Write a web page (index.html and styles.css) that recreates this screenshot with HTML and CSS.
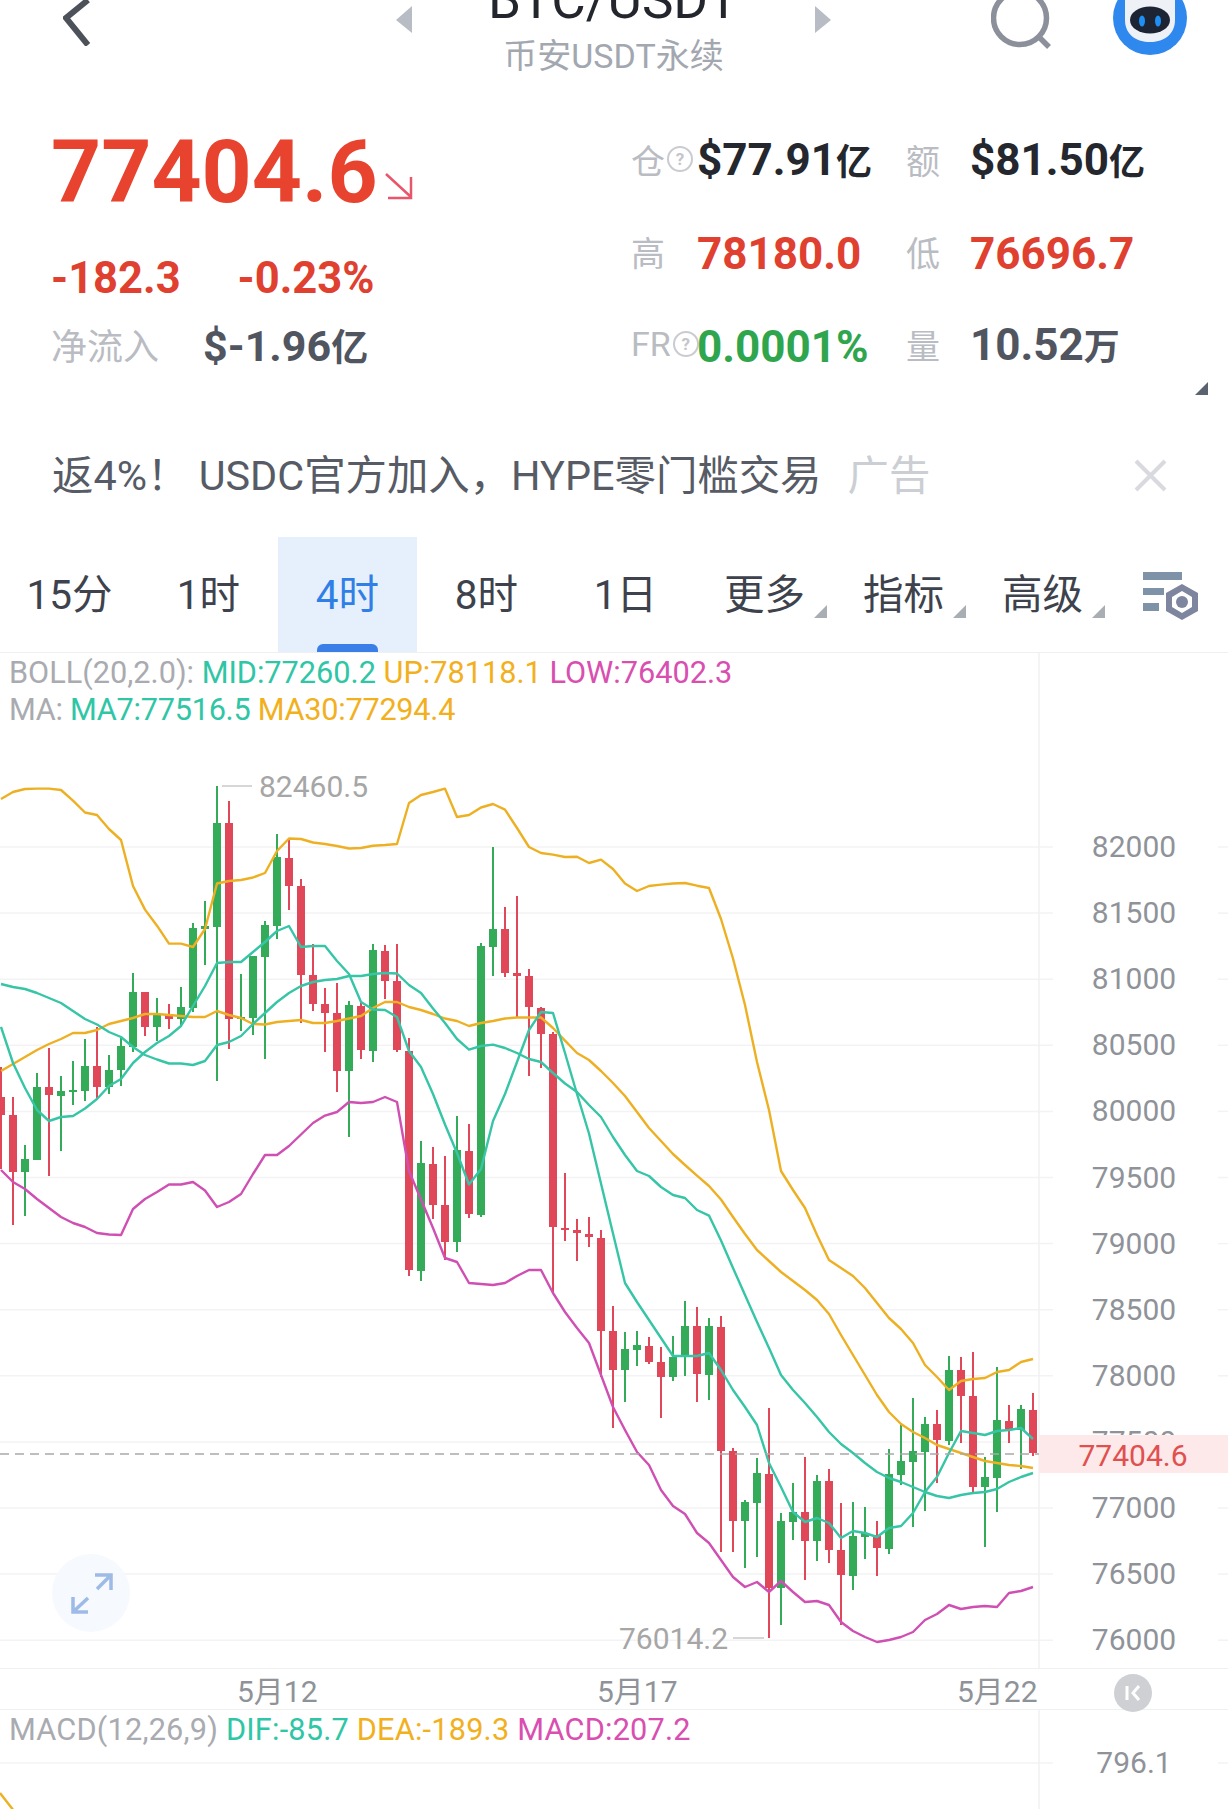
FILE: index.html
```html
<!DOCTYPE html>
<html lang="zh">
<head>
    <meta charset="UTF-8">
    <meta name="viewport" content="width=device-width, initial-scale=1.0">
    <title>BTC/USDT</title>
    <link rel="stylesheet" href="styles.css">
</head>
<body>
    <div class="page">
        <header class="topbar">
            <svg class="icon-back" viewBox="0 0 27 46"><path d="M25 0 L3 18 L25 45"/></svg>
            <svg class="icon-tri-left" viewBox="0 0 16 27"><path d="M16 0 V27 L0 14 Z"/></svg>
            <div class="title">
                <div class="title-main">BTC/USDT</div>
                <div class="title-sub">币安USDT永续</div>
            </div>
            <svg class="icon-tri-right" viewBox="0 0 16 27"><path d="M0 0 V27 L16 14 Z"/></svg>
            <svg class="icon-search" viewBox="0 0 60 50"><circle cx="29" cy="18" r="26.5"/><path d="M48 37 L58 47"/></svg>
            <svg class="icon-avatar" viewBox="0 0 74 56">
                <circle cx="37" cy="18" r="37" fill="#2f88ee"/>
                <path d="M12 -4 L20 -2 H54 L62 -4 V20 C62 35 50 42 37 42 C24 42 12 35 12 20 Z" fill="#eef2f6"/>
                <ellipse cx="37" cy="20" rx="20" ry="13.5" fill="#1d2433"/>
                <ellipse cx="29" cy="21" rx="3" ry="5.5" fill="#1e8ff5"/>
                <ellipse cx="45" cy="21" rx="3" ry="5.5" fill="#1e8ff5"/>
            </svg>
        </header>

        <section class="quote">
            <div class="quote-left">
                <div class="price">77404.6<svg class="icon-down" viewBox="0 0 30 28"><path d="M2 2 L27 25 M27 5 V26 H4"/></svg></div>
                <div class="change"><span>-182.3</span><span>-0.23%</span></div>
                <div class="netflow"><span class="label">净流入</span><span class="netflow-val">$-1.96<span class="unit">亿</span></span></div>
            </div>
            <div class="quote-right">
                <div class="stat"><span class="label">仓<i class="tip">?</i></span><b class="dark">$77.91<span class="unit">亿</span></b></div>
                <div class="stat"><span class="label">额</span><b class="dark">$81.50<span class="unit">亿</span></b></div>
                <div class="stat"><span class="label">高</span><b class="red">78180.0</b></div>
                <div class="stat"><span class="label">低</span><b class="red">76696.7</b></div>
                <div class="stat"><span class="label">FR<i class="tip">?</i></span><b class="green">0.0001%</b></div>
                <div class="stat"><span class="label">量</span><b class="slate">10.52<span class="unit">万</span></b></div>
            </div>
        </section>
        <div class="quote-more"><svg viewBox="0 0 13 13"><path d="M13 0 V13 H0 Z"/></svg></div>

        <div class="notice">
            <span class="notice-text">返4%！ USDC官方加入，HYPE零门槛交易</span>
            <span class="notice-ad">广告</span>
            <svg class="icon-close" viewBox="0 0 33 33"><path d="M2 2 L31 31 M31 2 L2 31"/></svg>
        </div>

        <nav class="tabs">
            <div class="tab">15分</div>
            <div class="tab">1时</div>
            <div class="tab active">4时</div>
            <div class="tab">8时</div>
            <div class="tab">1日</div>
            <div class="tab more">更多</div>
            <div class="tab more">指标</div>
            <div class="tab more">高级</div>
            <div class="tab-setting">
                <svg viewBox="0 0 58 50">
                    <rect class="bar" x="0" y="0" width="39" height="8"/>
                    <rect class="bar" x="0" y="16" width="21" height="7"/>
                    <rect class="bar" x="0" y="31" width="16" height="8"/>
                    <path class="hex" fill-rule="evenodd" d="M39 12 L55 21 V39 L39 48 L23 39 V21 Z M39 19 L29 25 V35 L39 41 L49 35 V25 Z"/>
                    <circle class="hex" cx="39" cy="30" r="6"/>
                </svg>
            </div>
        </nav>

        <div class="chart-pane">
            <div class="legend">
                <div><span class="c-gray">BOLL(20,2.0):</span> <span class="c-teal">MID:77260.2</span> <span class="c-orange">UP:78118.1</span> <span class="c-pink">LOW:76402.3</span></div>
                <div class="legend-tight"><span class="c-gray">MA:</span> <span class="c-teal">MA7:77516.5</span> <span class="c-orange">MA30:77294.4</span></div>
            </div>
            <svg id="kline" class="chart" viewBox="0 653 1228 1015"></svg>
        </div>

        <div class="xaxis">
            <span>5月12</span>
            <span>5月17</span>
            <span>5月22</span>
            <svg class="icon-k" viewBox="0 0 38 38"><circle cx="19" cy="19" r="19"/><path d="M13 12 V26 M25 12 L19 19 L25 26"/></svg>
        </div>

        <div class="macd-pane">
            <div class="legend">
                <div class="legend-wide"><span class="c-gray">MACD(12,26,9)</span> <span class="c-teal">DIF:-85.7</span> <span class="c-orange">DEA:-189.3</span> <span class="c-pink">MACD:207.2</span></div>
            </div>
            <svg class="chart" viewBox="0 1710 1228 99">
                <line class="grid" x1="0" y1="1763" x2="1053" y2="1763"/>
                <line class="grid" x1="1218" y1="1763" x2="1228" y2="1763"/>
                <line class="axis-line" x1="1039" y1="1710" x2="1039" y2="1809"/>
                <text class="axis-label" x="1134" y="1773" text-anchor="middle">796.1</text>
                <polyline class="line-orange" points="0,1793 14,1811"/>
            </svg>
        </div>
    </div>
    <script src="chart.js"></script>
</body>
</html>
```

FILE: styles.css
```css
* {
    box-sizing: border-box;
}

html, body {
    margin: 0;
    padding: 0;
    background-color: #fff;
}

body {
    font-family: Roboto, "Noto Sans CJK SC", sans-serif;
    color: #333;
}

.page {
    width: 1228px;
    height: 1809px;
    overflow: hidden;
}

/* 顶部栏 */
.topbar {
    display: flex;
    align-items: flex-start;
    height: 90px;
    padding-left: 63px;
}

.topbar svg {
    flex: none;
}

.icon-back {
    width: 27px;
    height: 46px;
    fill: none;
    stroke: #4d5159;
    stroke-width: 6;
}

.icon-tri-left,
.icon-tri-right {
    width: 16px;
    height: 27px;
    margin-top: 6px;
    fill: #b7bcc5;
}

.icon-tri-left {
    margin-left: 306px;
}

.title {
    width: 403px;
    text-align: center;
}

.title-main {
    margin-top: -26px;
    font-size: 53px;
    line-height: 52px;
    color: #23262c;
}

.title-sub {
    margin-top: 12px;
    font-size: 34px;
    line-height: 36px;
    color: #a2a7b0;
}

.icon-search {
    width: 60px;
    height: 50px;
    margin-left: 160px;
    fill: none;
    stroke: #8b909a;
    stroke-width: 5.5;
}

.icon-avatar {
    width: 74px;
    height: 56px;
    margin-left: 62px;
}

/* 行情 */
.quote {
    display: flex;
    height: 279px;
    padding: 36px 0 0 51px;
}

.quote-left {
    width: 580px;
}

.price {
    display: flex;
    align-items: flex-end;
    height: 92px;
    font-size: 87.5px;
    line-height: 92px;
    font-weight: 700;
    color: #e8432f;
}

.icon-down {
    width: 30px;
    height: 28px;
    margin: 0 0 18px 6px;
    fill: none;
    stroke: #e9556a;
    stroke-width: 2.5;
}

.change {
    display: flex;
    gap: 57px;
    margin-top: 38px;
    font-size: 43.5px;
    line-height: 46px;
    font-weight: 700;
    color: #e0402f;
}

.netflow {
    display: flex;
    gap: 44px;
    margin-top: 21px;
    line-height: 46px;
}

.label {
    display: flex;
    align-items: center;
    font-size: 36px;
    color: #b9bcc2;
}

.netflow-val {
    font-size: 43px;
    font-weight: 700;
    color: #50555f;
}

.unit {
    font-size: 36px;
}

.netflow-val .unit {
    font-size: 37px;
}

.quote-right {
    display: grid;
    grid-template-columns: 275px 1fr;
    grid-auto-rows: 46px;
    row-gap: 46.5px;
    margin-top: 10px;
}

.stat {
    display: flex;
    align-items: center;
    white-space: nowrap;
}

.stat .label {
    width: 66px;
    font-size: 34px;
}

.stat:nth-child(even) .label {
    width: 64px;
}

.stat b {
    padding-top: 5px;
    font-size: 44px;
    line-height: 46px;
}

.dark {
    color: #24272d;
}

.red {
    color: #e0402f;
}

.green {
    color: #2fa64e;
}

.slate {
    color: #50555f;
}

.tip {
    flex: none;
    width: 26px;
    height: 26px;
    margin-left: 2px;
    border: 2px solid #c9cbd0;
    border-radius: 50%;
    font-size: 17px;
    font-style: normal;
    font-weight: 700;
    line-height: 22px;
    text-align: center;
    color: #c3c5ca;
}

.quote-more {
    display: flex;
    justify-content: flex-end;
    height: 13px;
    margin-top: 13px;
    padding-right: 20px;
}

.quote-more svg {
    width: 13px;
    height: 13px;
    fill: #5b6270;
}

/* 广告条 */
.notice {
    display: flex;
    align-items: center;
    height: 60px;
    margin-top: 50px;
    padding: 0 0 0 52px;
    font-size: 41.4px;
    white-space: nowrap;
}

.notice-text {
    margin-bottom: 6px;
    color: #565b65;
}

.notice-ad {
    margin-bottom: 6px;
    margin-left: 26px;
    color: #cbced3;
}

.icon-close {
    width: 33px;
    height: 33px;
    margin-left: 204px;
    fill: none;
    stroke: #d8dadf;
    stroke-width: 4;
}

/* 周期切换 */
.tabs {
    display: grid;
    grid-template-columns: repeat(8, 139px) 1fr;
    height: 116px;
    margin-top: 32px;
    border-bottom: 1px solid #f0f0f2;
}

.tab {
    position: relative;
    display: flex;
    align-items: center;
    justify-content: center;
    padding-bottom: 7px;
    font-size: 40.5px;
    color: #3d424c;
}

.tab.active {
    background-color: #e6f0fc;
    color: #2f7fe6;
}

.tab.active::after {
    content: "";
    position: absolute;
    left: 39px;
    bottom: 0;
    width: 61px;
    height: 8px;
    border-radius: 6px 6px 0 0;
    background-color: #3a7fe8;
}

.tab.more::after {
    content: "";
    position: absolute;
    right: 7px;
    top: 68px;
    border-style: solid;
    border-width: 0 0 13px 13px;
    border-color: transparent transparent #a9adb4 transparent;
}

.tab-setting {
    display: flex;
    padding: 35px 0 0 31px;
}

.tab-setting svg {
    width: 58px;
    height: 50px;
}

.bar {
    fill: #7f93a8;
}

.hex {
    fill: #7d859f;
}

/* K线 */
.chart-pane,
.macd-pane {
    position: relative;
}

.chart-pane {
    height: 1015px;
}

.macd-pane {
    height: 99px;
}

.chart {
    display: block;
    width: 1228px;
    height: 100%;
}

.legend {
    position: absolute;
    left: 9px;
    top: 1px;
    z-index: 1;
    font-size: 30.7px;
    line-height: 37px;
    white-space: nowrap;
}

.legend-tight {
    letter-spacing: -0.27px;
}

.legend-wide {
    letter-spacing: 0.2px;
}

.c-gray {
    color: #a9abb0;
}

.c-teal {
    color: #2fc6a6;
}

.c-orange {
    color: #f2b01e;
}

.c-pink {
    color: #d94fb0;
}

.grid {
    stroke: #f3f3f5;
    stroke-width: 1.5;
}

.axis-line {
    stroke: #f0f0f2;
    stroke-width: 1.5;
}

.axis-label {
    font-size: 30px;
    fill: #8f9399;
}

.extreme-label {
    font-size: 30px;
    fill: #a6a6a6;
}

.extreme-line {
    stroke: #c8c8c8;
    stroke-width: 1.5;
}

.last-line {
    stroke: #a9a9a9;
    stroke-width: 1.5;
    stroke-dasharray: 9 6;
}

.last-bg {
    fill: #fde9e9;
}

.last-label {
    font-size: 30px;
    fill: #e0504f;
}

.wick-r,
.body-r {
    stroke: #e0485a;
    fill: #e0485a;
}

.wick-g,
.body-g {
    stroke: #34ab59;
    fill: #34ab59;
}

.wick-r,
.wick-g {
    stroke-width: 2;
}

.body-r,
.body-g {
    stroke: none;
}

.line-orange,
.line-teal,
.line-pink {
    fill: none;
    stroke-width: 2.4;
    stroke-linejoin: round;
}

.line-orange {
    stroke: #eeb023;
}

.line-teal {
    stroke: #36c5a6;
}

.line-pink {
    stroke: #cf4fb3;
}

.expand-bg {
    fill: #f6f9fd;
}

.expand-arrow {
    fill: none;
    stroke: #9dbbe6;
    stroke-width: 3.5;
}

/* 时间轴 */
.xaxis {
    display: flex;
    align-items: center;
    gap: 280px;
    height: 42px;
    padding-left: 237px;
    border-top: 1.5px solid #f0f0f2;
    border-bottom: 1.5px solid #f0f0f2;
    font-size: 30px;
    color: #8f9399;
}

.xaxis span {
    flex: none;
    width: 80px;
    white-space: nowrap;
}

.icon-k {
    flex: none;
    align-self: flex-start;
    width: 38px;
    height: 38px;
    margin: 5px 0 0 -203px;
    overflow: visible;
}

.icon-k circle {
    fill: #cfd0d3;
}

.icon-k path {
    fill: none;
    stroke: #fff;
    stroke-width: 3;
}
```

FILE: chart.js
```js
// 数据为页面像素坐标：[高, 低, 实体上, 实体下, 颜色]
const candles = [
    [1067, 1169, 1097, 1115, 'r'], [1097, 1225, 1115, 1172, 'r'], [1145, 1216, 1159, 1172, 'g'], [1073, 1160, 1087, 1160, 'g'],
    [1048, 1176, 1087, 1095, 'r'], [1076, 1151, 1091, 1096, 'g'], [1061, 1105, 1090, 1092, 'g'], [1039, 1101, 1066, 1091, 'g'],
    [1027, 1099, 1066, 1087, 'r'], [1055, 1094, 1070, 1087, 'g'], [1038, 1086, 1046, 1070, 'g'], [973, 1052, 992, 1047, 'g'],
    [992, 1036, 992, 1027, 'r'], [998, 1041, 1014, 1027, 'g'], [1004, 1029, 1015, 1019, 'r'], [987, 1026, 1007, 1019, 'g'],
    [923, 1012, 928, 1008, 'g'], [901, 965, 926, 929, 'g'], [786, 1081, 823, 927, 'g'], [801, 1049, 823, 1019, 'r'],
    [974, 1031, 1017, 1019, 'g'], [956, 1035, 956, 1018, 'g'], [921, 1059, 925, 957, 'g'], [834, 939, 857, 926, 'g'],
    [840, 910, 858, 886, 'r'], [879, 1023, 886, 975, 'r'], [944, 1011, 975, 1004, 'r'], [988, 1052, 1004, 1013, 'r'],
    [983, 1092, 1013, 1071, 'r'], [1001, 1137, 1005, 1071, 'g'], [1002, 1059, 1006, 1050, 'r'], [944, 1062, 950, 1051, 'g'],
    [945, 999, 951, 981, 'r'], [944, 1052, 981, 1050, 'r'], [1038, 1276, 1051, 1270, 'r'], [1141, 1281, 1163, 1271, 'g'],
    [1147, 1219, 1164, 1205, 'r'], [1156, 1260, 1205, 1242, 'r'], [1116, 1252, 1150, 1242, 'g'], [1124, 1218, 1151, 1214, 'r'],
    [943, 1217, 946, 1215, 'g'], [847, 976, 929, 947, 'g'], [907, 977, 929, 973, 'r'], [896, 1017, 973, 976, 'r'],
    [969, 1076, 976, 1007, 'r'], [1007, 1068, 1008, 1034, 'r'], [1032, 1294, 1034, 1227, 'r'], [1173, 1241, 1228, 1229, 'r'],
    [1219, 1261, 1230, 1233, 'r'], [1217, 1247, 1234, 1237, 'r'], [1230, 1377, 1238, 1331, 'r'], [1306, 1428, 1331, 1370, 'r'],
    [1332, 1402, 1349, 1370, 'g'], [1331, 1366, 1345, 1350, 'g'], [1337, 1364, 1346, 1362, 'r'], [1347, 1418, 1362, 1377, 'r'],
    [1336, 1381, 1357, 1377, 'g'], [1301, 1376, 1326, 1357, 'g'], [1307, 1402, 1326, 1374, 'r'], [1318, 1400, 1326, 1375, 'g'],
    [1316, 1552, 1327, 1451, 'r'], [1448, 1552, 1451, 1521, 'r'], [1500, 1568, 1502, 1521, 'g'], [1458, 1557, 1473, 1503, 'g'],
    [1408, 1638, 1474, 1588, 'r'], [1513, 1625, 1521, 1588, 'g'], [1483, 1540, 1512, 1522, 'g'], [1457, 1580, 1512, 1541, 'r'],
    [1475, 1561, 1481, 1541, 'g'], [1469, 1563, 1481, 1550, 'r'], [1503, 1625, 1550, 1575, 'r'], [1502, 1590, 1536, 1576, 'g'],
    [1507, 1559, 1533, 1537, 'g'], [1521, 1576, 1535, 1548, 'r'], [1449, 1554, 1474, 1549, 'g'], [1423, 1485, 1461, 1475, 'g'],
    [1398, 1527, 1451, 1462, 'g'], [1417, 1511, 1424, 1452, 'g'], [1410, 1483, 1424, 1440, 'r'], [1356, 1445, 1370, 1441, 'g'],
    [1357, 1443, 1370, 1396, 'r'], [1352, 1493, 1396, 1487, 'r'], [1457, 1547, 1477, 1487, 'g'], [1367, 1512, 1420, 1478, 'g'],
    [1405, 1443, 1421, 1430, 'r'], [1405, 1469, 1409, 1430, 'g'], [1393, 1456, 1410, 1453, 'r']
];

const series = {
    up: [799, 792, 789, 788.6, 788.6, 790, 800.7, 812.5, 815, 829, 840, 886, 909.6, 925.7, 943.6, 943.6, 947, 929, 883.5, 881, 880, 877.5, 873, 851, 838.5, 839, 842.5, 844, 846, 848.5, 848, 845.7, 845, 844, 803, 795, 792, 788.6, 817, 815, 807.5, 804, 809.6, 828, 847, 853, 854.6, 857, 856.8, 863, 859.6, 869, 883.5, 891, 886, 884.6, 883.5, 883, 885.7, 888, 919, 958.5, 1005, 1062, 1110, 1171, 1190, 1208, 1235, 1260, 1268, 1276, 1288, 1303, 1318, 1329, 1343, 1365, 1377, 1390, 1381, 1379, 1378, 1372, 1370, 1362, 1359],
    ma30: [1071, 1064, 1057, 1050, 1044, 1039, 1033, 1033, 1030, 1024, 1021, 1018, 1014, 1014, 1015, 1016, 1017, 1017, 1011, 1015, 1018, 1024, 1024.5, 1022, 1021, 1020, 1023, 1023, 1021, 1018.5, 1016, 1008, 1002, 1002, 1007, 1010, 1014, 1018.5, 1021, 1026, 1023, 1021, 1018.5, 1017.5, 1017.5, 1017.5, 1028, 1040.6, 1053, 1060, 1071, 1083, 1096, 1112, 1128, 1141, 1154, 1165, 1175.6, 1186, 1199.5, 1217, 1234, 1250, 1261, 1272, 1281, 1290, 1300, 1314, 1335, 1355, 1375, 1395, 1412, 1424, 1432, 1438, 1445, 1449, 1453, 1457, 1461, 1463, 1465, 1466, 1468],
    ma7: [1027, 1063, 1088, 1110, 1121, 1117, 1116, 1108.5, 1099, 1086, 1079, 1063, 1052, 1043, 1036, 1026, 1006, 986, 963, 962, 962, 952, 942, 931, 926, 947, 946, 946, 961, 974, 1002, 1009.5, 1010, 1017, 1051, 1067, 1094, 1124.5, 1153, 1184.5, 1169, 1121, 1094, 1062, 1030, 1012, 1013, 1053, 1094, 1133.5, 1183.5, 1233.5, 1283, 1302, 1320, 1338, 1356, 1356, 1356, 1353, 1370, 1390, 1407, 1425, 1463, 1487, 1512, 1522, 1518, 1523, 1538, 1531, 1533, 1537, 1528, 1526, 1513, 1492, 1477, 1453, 1431, 1433, 1435, 1431, 1430, 1428, 1439],
    mid: [984, 987, 989, 993, 998, 1003, 1011, 1019, 1024.5, 1032, 1037, 1047, 1055, 1059.5, 1063.5, 1063.5, 1065, 1061, 1045, 1042, 1036, 1024, 1013, 1002, 993, 986, 982, 980, 979, 976, 976, 974, 973, 973.5, 985, 993, 1008.5, 1023, 1039, 1049.6, 1046, 1044.6, 1048, 1053, 1059, 1062, 1073, 1083.5, 1092, 1105, 1117, 1137, 1155, 1171, 1176, 1187, 1195, 1198, 1210, 1215.6, 1240.5, 1268, 1295, 1322, 1348, 1375, 1390, 1403, 1417, 1432, 1444, 1453, 1463, 1472, 1478, 1482, 1487, 1492, 1496, 1498, 1495, 1493, 1492, 1489, 1482, 1477, 1473],
    low: [1170, 1182, 1189, 1199, 1208, 1217, 1223, 1227, 1233, 1234.5, 1235, 1209, 1199, 1192, 1184.5, 1184.5, 1182, 1190.5, 1207, 1202, 1194, 1174, 1155, 1155, 1146, 1134.5, 1123, 1115.6, 1112, 1102, 1103, 1102, 1097, 1102, 1171, 1199.5, 1228, 1258, 1262, 1283, 1284, 1285, 1283, 1276, 1270, 1270, 1293, 1312, 1328, 1343, 1375, 1407, 1430, 1452, 1465, 1490, 1506, 1514, 1533, 1543, 1560, 1577, 1587, 1582, 1592, 1581, 1592, 1602, 1601, 1605, 1622, 1631, 1637, 1642, 1640, 1637, 1632, 1620, 1614, 1605, 1609, 1607, 1606, 1607, 1593, 1591, 1587]
};

const svg = document.getElementById('kline');
const NS = 'http://www.w3.org/2000/svg';

function add(tag, cls, attrs, text) {
    const el = document.createElementNS(NS, tag);
    el.setAttribute('class', cls);
    for (const key in attrs) {
        el.setAttribute(key, attrs[key]);
    }
    if (text) {
        el.textContent = text;
    }
    svg.appendChild(el);
    return el;
}

function xAt(i) {
    return 1 + i * 12;
}

// 网格和价格轴
for (let k = 0; k <= 12; k++) {
    const y = 847 + k * 66.1;
    add('line', 'grid', { x1: 0, y1: y, x2: 1053, y2: y });
    add('line', 'grid', { x1: 1218, y1: y, x2: 1228, y2: y });
    add('text', 'axis-label', { x: 1134, y: y + 10, 'text-anchor': 'middle' }, String(82000 - k * 500));
}
add('line', 'axis-line', { x1: 1039, y1: 653, x2: 1039, y2: 1668 });

// 蜡烛
candles.forEach((c, i) => {
    const x = xAt(i);
    add('line', 'wick-' + c[4], { x1: x, y1: c[0], x2: x, y2: c[1] });
    add('rect', 'body-' + c[4], { x: x - 4, y: c[2], width: 8, height: Math.max(c[3] - c[2], 2) });
});

// 指标线
function drawLine(values, cls) {
    const points = values.map((y, i) => xAt(i) + ',' + y).join(' ');
    add('polyline', cls, { points: points });
}
drawLine(series.up, 'line-orange');
drawLine(series.ma30, 'line-orange');
drawLine(series.ma7, 'line-teal');
drawLine(series.mid, 'line-teal');
drawLine(series.low, 'line-pink');

// 最高最低标注
add('line', 'extreme-line', { x1: 222, y1: 786, x2: 252, y2: 786 });
add('text', 'extreme-label', { x: 259, y: 797 }, '82460.5');
add('line', 'extreme-line', { x1: 733, y1: 1638, x2: 764, y2: 1638 });
add('text', 'extreme-label', { x: 619, y: 1649 }, '76014.2');

// 最新价
add('line', 'last-line', { x1: 0, y1: 1454, x2: 1039, y2: 1454 });
add('rect', 'last-bg', { x: 1039, y: 1435, width: 189, height: 38 });
add('text', 'last-label', { x: 1133, y: 1466, 'text-anchor': 'middle' }, '77404.6');

// 全屏按钮
add('circle', 'expand-bg', { cx: 91, cy: 1593, r: 39 });
add('path', 'expand-arrow', { d: 'M95 1575 H111 V1590 M111 1575 L97 1589 M73 1597 V1612 H88 M73 1612 L88 1598' });
```
